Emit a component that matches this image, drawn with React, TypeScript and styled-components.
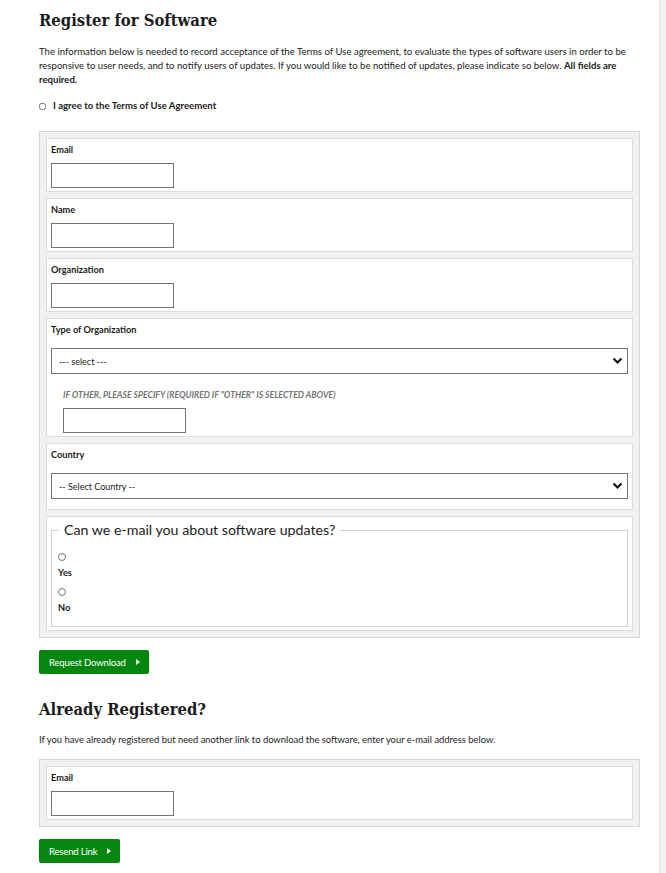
import styled, { createGlobalStyle } from 'styled-components';

const GlobalStyle = createGlobalStyle`
    body {
        margin: 0;
        background: #FFFFFF;
        color: #1b1b1b;
        font-family: "Lato", "Liberation Sans", sans-serif;
    }
    * { box-sizing: border-box; }
`;

const Page = styled.div`
    display: flex;
    min-height: 873px;
`;

const Main = styled.main`
    flex: 1;
    padding: 9px 19px 10px 39px;
`;

const Scrollbar = styled.div`
    width: 7px;
    flex-shrink: 0;
    background: #f1f1f1;
    border-left: 1px solid #e8e8e8;
`;

const Title = styled.h1<{ $top?: number }>`
    margin: ${(p) => p.$top ?? 0}px 0 0;
    font-family: "DejaVu Serif Condensed", "DejaVu Serif", "Liberation Serif", serif;
    font-stretch: condensed;
    font-size: 16.5px;
    line-height: 24px;
    font-weight: 700;
    color: #1b1b1b;
`;

const Intro = styled.p`
    margin: 12px 0 0;
    font-size: 9.6px;
    line-height: 14px;
    color: #1b1b1b;

    strong { font-weight: 700; }
`;

const AgreeRow = styled.label`
    display: flex;
    align-items: center;
    gap: 7px;
    margin-top: 12px;
    font-size: 9.6px;
    font-weight: 700;
    line-height: 14px;
`;

const Check = styled.input`
    width: 7px;
    height: 7px;
    margin: 0;
`;

const Panel = styled.div<{ $top: number }>`
    display: flex;
    flex-direction: column;
    gap: 6px;
    margin-top: ${(p) => p.$top}px;
    padding: 6px;
    background: #f1f1f1;
    border: 1px solid #d6d6d6;
`;

const Card = styled.div`
    display: flex;
    flex-direction: column;
    align-items: flex-start;
    padding: 4px 4px 3px;
    background: #FFFFFF;
    border: 1px solid #dcdcdc;
`;

const Label = styled.label`
    font-size: 9.2px;
    font-weight: 700;
    line-height: 14px;
    color: #1b1b1b;
`;

const TextInput = styled.input<{ $indent?: number; $top?: number }>`
    width: 123px;
    height: 25px;
    margin: ${(p) => p.$top ?? 6}px 0 0 ${(p) => p.$indent ?? 0}px;
    border: 1px solid #757575;
    background: #FFFFFF;
`;

const SelectWrap = styled.div<{ $bottom: number }>`
    position: relative;
    align-self: stretch;
    margin: 11px 0 ${(p) => p.$bottom}px;
`;

const Select = styled.select`
    appearance: none;
    width: 100%;
    height: 26px;
    padding: 0 7px;
    border: 1px solid #757575;
    background: #FFFFFF;
    font-family: "Lato", "Liberation Sans", sans-serif;
    font-size: 9px;
    color: #1b1b1b;
`;

const Chevron = styled.svg`
    position: absolute;
    right: 5px;
    top: 9px;
    pointer-events: none;
`;

const Hint = styled.div`
    margin: 16px 0 0 12px;
    font-size: 8.7px;
    font-weight: 700;
    font-style: italic;
    text-transform: uppercase;
    line-height: 10px;
    color: #757575;
`;

const Fieldset = styled.fieldset`
    align-self: stretch;
    margin: 0;
    padding: 5px 6px 12px;
    border: 1px solid #cfcfcf;
`;

const Legend = styled.legend`
    margin-left: 1px;
    padding: 0 5px;
    font-size: 14.2px;
    line-height: 18px;
    color: #1b1b1b;
`;

const Option = styled.label`
    display: flex;
    flex-direction: column;
    align-items: flex-start;
    gap: 6px;
    margin-top: 9px;
    font-size: 9.2px;
    font-weight: 700;
    line-height: 12px;
`;

const Radio = styled.input`
    width: 8px;
    height: 8px;
    margin: 0;
`;

const Button = styled.button<{ $top: number }>`
    display: inline-flex;
    align-items: center;
    gap: 10px;
    height: 24px;
    margin-top: ${(p) => p.$top}px;
    padding: 0 9px 0 10px;
    border: none;
    border-radius: 2px;
    background: #05870f;
    color: #FFFFFF;
    font-family: "Lato", "Liberation Sans", sans-serif;
    font-size: 9.6px;
    letter-spacing: -0.2px;
    cursor: pointer;
`;

const Para = styled.p`
    margin: 11px 0 0;
    font-size: 9.4px;
    line-height: 14px;
`;

function Arrow() {
    return (
        <svg width="4" height="6" viewBox="0 0 4 6">
            <path d="M0 0 L4 3 L0 6 Z" fill="#FFFFFF" />
        </svg>
    );
}

function Dropdown({ placeholder, bottom }: { placeholder: string; bottom: number }) {
    return (
        <SelectWrap $bottom={bottom}>
            <Select defaultValue="">
                <option value="">{placeholder}</option>
            </Select>
            <Chevron width="11" height="8" viewBox="0 0 11 8">
                <path d="M1.5 1.5 L5.5 5.5 L9.5 1.5" fill="none" stroke="#111" strokeWidth="2.2" />
            </Chevron>
        </SelectWrap>
    );
}

function Field({ label }: { label: string }) {
    return (
        <Card>
            <Label>{label}</Label>
            <TextInput type="text" />
        </Card>
    );
}

export default function App() {
    return (
        <Page>
            <GlobalStyle />
            <Main>
                <Title>Register for Software</Title>
                <Intro>
                    The information below is needed to record acceptance of the Terms of Use agreement, to evaluate the types of software users in order to be responsive to user needs, and to notify users of updates. If you would like to be notified of updates, please indicate so below. <strong>All fields are required.</strong>
                </Intro>
                <AgreeRow>
                    <Check type="checkbox" />
                    I agree to the Terms of Use Agreement
                </AgreeRow>

                <Panel $top={18}>
                    <Field label="Email" />
                    <Field label="Name" />
                    <Field label="Organization" />
                    <Card>
                        <Label>Type of Organization</Label>
                        <Dropdown placeholder="--- select ---" bottom={0} />
                        <Hint>If other, please specify (required if "other" is selected above)</Hint>
                        <TextInput type="text" $indent={12} $top={8} />
                    </Card>
                    <Card>
                        <Label>Country</Label>
                        <Dropdown placeholder="-- Select Country --" bottom={7} />
                    </Card>
                    <Card>
                        <Fieldset>
                            <Legend>Can we e-mail you about software updates?</Legend>
                            <Option>
                                <Radio type="radio" name="updates" />
                                Yes
                            </Option>
                            <Option>
                                <Radio type="radio" name="updates" />
                                No
                            </Option>
                        </Fieldset>
                    </Card>
                </Panel>

                <Button type="button" $top={12}>
                    Request Download <Arrow />
                </Button>

                <Title $top={24}>Already Registered?</Title>
                <Para>
                    If you have already registered but need another link to download the software, enter your e-mail address below.
                </Para>

                <Panel $top={12}>
                    <Field label="Email" />
                </Panel>

                <Button type="button" $top={12}>
                    Resend Link <Arrow />
                </Button>
            </Main>
            <Scrollbar />
        </Page>
    );
}
